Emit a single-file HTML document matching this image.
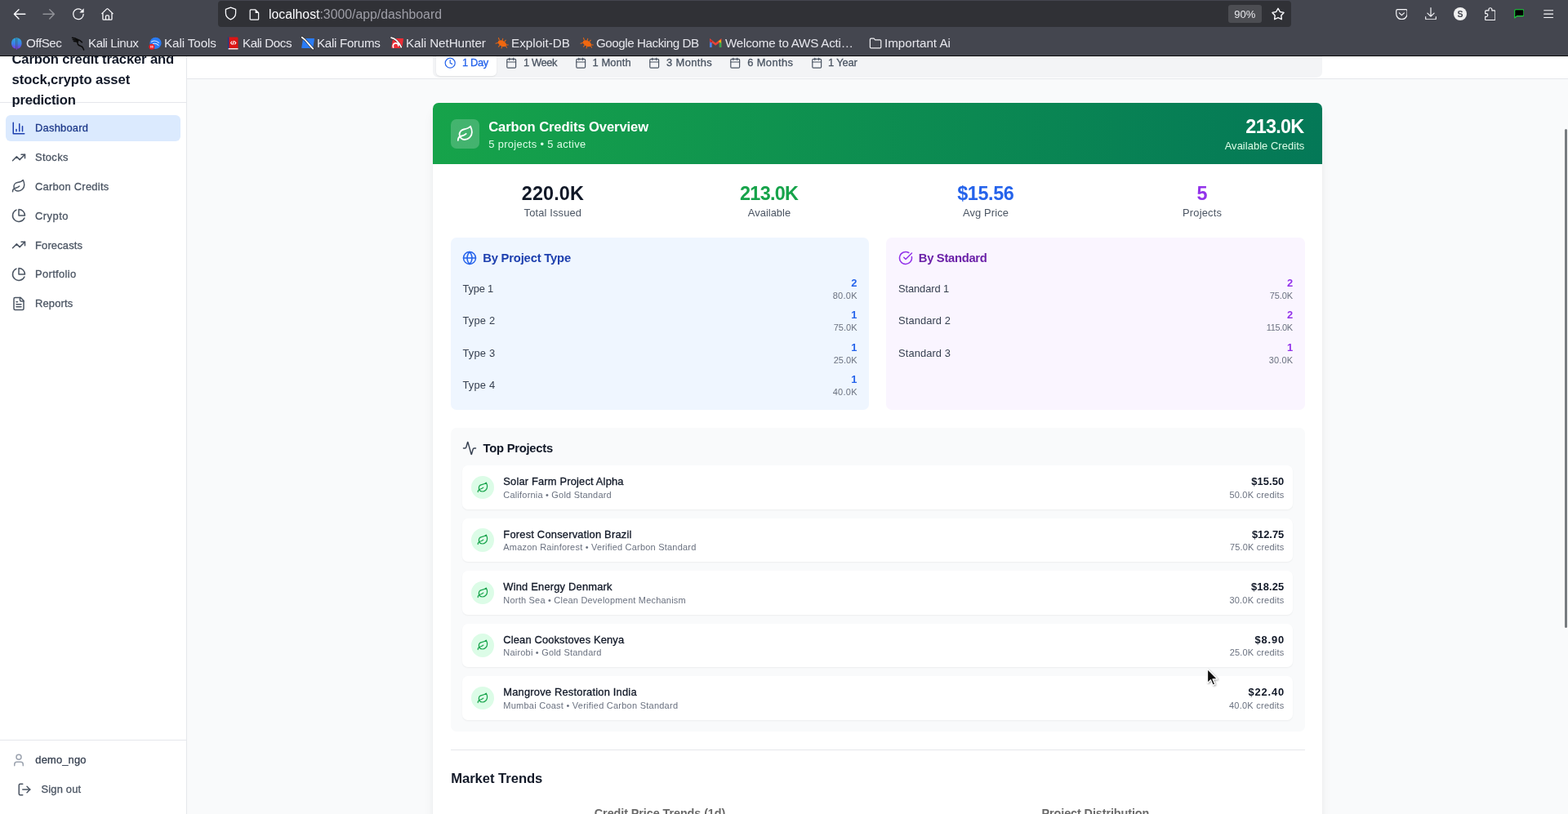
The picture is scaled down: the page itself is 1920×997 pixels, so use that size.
<!DOCTYPE html>
<html lang="en">
<head>
<meta charset="utf-8">
<title>Dashboard - Carbon credit tracker</title>
<style>
*{box-sizing:border-box;margin:0;padding:0}
html,body{width:1920px;height:997px;overflow:hidden;background:#f9fafb}
body{font-family:"Liberation Sans",sans-serif;position:relative;color:#111827}
#page{position:absolute;left:0;top:0;width:1920px;height:997px;overflow:hidden;will-change:transform}
.abs{position:absolute}
svg{display:block}
.ic{fill:none;stroke:currentColor;stroke-width:2;stroke-linecap:round;stroke-linejoin:round}
.t{position:absolute;white-space:nowrap}
#chrome{position:absolute;left:0;top:0;width:1920px;height:69px;background:#44464f;z-index:50;border-bottom:1px solid #0c0c0d;color:#fbfbfe}
#urlbar{position:absolute;left:267px;top:1px;width:1314px;height:32px;border-radius:4px;background:#303136}
#zoomb{position:absolute;left:1504px;top:6px;width:41px;height:22px;border-radius:3px;background:#4c4d52}
#side{position:absolute;left:0;top:0;width:229px;height:997px;background:#fff;border-right:1px solid #e5e7eb;z-index:10}
#top{position:absolute;left:229px;top:69px;width:1691px;height:28px;background:#fff;border-bottom:1px solid #e5e7eb}
#tabs{position:absolute;left:530px;top:55px;width:1089px;height:40.400px;background:#f3f4f6;border-radius:7px}
#tab1{position:absolute;left:534px;top:55px;width:74px;height:37.500px;background:#fff;border-radius:5px;box-shadow:0 1px 2px rgba(0,0,0,.08)}
#card{position:absolute;left:530px;top:126px;width:1089px;height:900px;background:#fff;border-radius:7px 7px 0 0;box-shadow:0 9px 14px -3px rgba(0,0,0,.1),0 4px 6px -4px rgba(0,0,0,.1)}
#ghead{position:absolute;left:530px;top:126px;width:1089px;height:75px;border-radius:7px 7px 0 0;background:linear-gradient(90deg,#16a34a,#047857)}
.box{position:absolute;border-radius:7px}
.item{position:absolute;left:566px;width:1017px;background:#fff;border-radius:7px;box-shadow:0 1px 2px rgba(0,0,0,.05)}
.circ{position:absolute;left:577px;width:28px;border-radius:50%;background:#dcfce7}
</style>
</head>
<body>
<div id="page">
<div id="top"></div>
<div id="tabs"></div>
<div id="tab1"></div>
<svg class="abs ic" style="left:544px;top:70px;width:14.4px;height:14.4px;color:#2563eb;stroke-width:2;" viewBox="0 0 24 24"><circle cx="12" cy="12" r="10"/><polyline points="12 6 12 12 16 14"/></svg>
<div class="t" style="left:566.00px;top:69px;font-size:12.90px;line-height:15px;color:#2563eb;-webkit-text-stroke:.3px currentColor;letter-spacing:-0.387px;">1 Day</div>
<svg class="abs ic" style="left:619px;top:70px;width:14.4px;height:14.4px;color:#4b5563;stroke-width:2;" viewBox="0 0 24 24"><rect width="18" height="18" x="3" y="4" rx="2" ry="2"/><line x1="16" x2="16" y1="2" y2="6"/><line x1="8" x2="8" y1="2" y2="6"/><line x1="3" x2="21" y1="10" y2="10"/></svg>
<div class="t" style="left:641.00px;top:69px;font-size:12.90px;line-height:15px;color:#4b5563;-webkit-text-stroke:.3px currentColor;letter-spacing:-0.387px;">1 Week</div>
<svg class="abs ic" style="left:704px;top:70px;width:14.4px;height:14.4px;color:#4b5563;stroke-width:2;" viewBox="0 0 24 24"><rect width="18" height="18" x="3" y="4" rx="2" ry="2"/><line x1="16" x2="16" y1="2" y2="6"/><line x1="8" x2="8" y1="2" y2="6"/><line x1="3" x2="21" y1="10" y2="10"/></svg>
<div class="t" style="left:725.60px;top:69px;font-size:12.90px;line-height:15px;color:#4b5563;-webkit-text-stroke:.3px currentColor;letter-spacing:0.065px;">1 Month</div>
<svg class="abs ic" style="left:794px;top:70px;width:14.4px;height:14.4px;color:#4b5563;stroke-width:2;" viewBox="0 0 24 24"><rect width="18" height="18" x="3" y="4" rx="2" ry="2"/><line x1="16" x2="16" y1="2" y2="6"/><line x1="8" x2="8" y1="2" y2="6"/><line x1="3" x2="21" y1="10" y2="10"/></svg>
<div class="t" style="left:816.00px;top:69px;font-size:12.90px;line-height:15px;color:#4b5563;-webkit-text-stroke:.3px currentColor;letter-spacing:0.391px;">3 Months</div>
<svg class="abs ic" style="left:893px;top:70px;width:14.4px;height:14.4px;color:#4b5563;stroke-width:2;" viewBox="0 0 24 24"><rect width="18" height="18" x="3" y="4" rx="2" ry="2"/><line x1="16" x2="16" y1="2" y2="6"/><line x1="8" x2="8" y1="2" y2="6"/><line x1="3" x2="21" y1="10" y2="10"/></svg>
<div class="t" style="left:915.20px;top:69px;font-size:12.90px;line-height:15px;color:#4b5563;-webkit-text-stroke:.3px currentColor;letter-spacing:0.391px;">6 Months</div>
<svg class="abs ic" style="left:993px;top:70px;width:14.4px;height:14.4px;color:#4b5563;stroke-width:2;" viewBox="0 0 24 24"><rect width="18" height="18" x="3" y="4" rx="2" ry="2"/><line x1="16" x2="16" y1="2" y2="6"/><line x1="8" x2="8" y1="2" y2="6"/><line x1="3" x2="21" y1="10" y2="10"/></svg>
<div class="t" style="left:1014.00px;top:69px;font-size:12.90px;line-height:15px;color:#4b5563;-webkit-text-stroke:.3px currentColor;letter-spacing:-0.178px;">1 Year</div>
<div id="card"></div>
<div id="ghead"></div>
<div class="abs" style="left:552px;top:146px;width:35px;height:36px;border-radius:7px;background:rgba(255,255,255,.2)"></div>
<svg class="abs ic" style="left:559px;top:153px;width:21.6px;height:21.6px;color:#fff;stroke-width:2;" viewBox="0 0 24 24"><path d="M11 20A7 7 0 0 1 9.8 6.1C15.5 5 17 4.48 19 2c1 2 2 4.18 2 8 0 5.5-4.78 10-10 10Z"/><path d="M2 21c0-3 1.85-5.36 5.08-6C9.5 14.52 12 13 13 12"/></svg>
<div class="t" style="left:598.20px;top:146px;font-size:16.60px;line-height:19px;color:#fff;font-weight:700;letter-spacing:-0.106px;">Carbon Credits Overview</div>
<div class="t" style="left:598.20px;top:169px;font-size:12.90px;line-height:15px;color:#dcfce7;letter-spacing:0.347px;">5 projects • 5 active</div>
<div class="t" style="left:1525.35px;top:142px;font-size:23.40px;line-height:26px;color:#fff;font-weight:700;letter-spacing:-0.702px;">213.0K</div>
<div class="t" style="left:1499.70px;top:171px;font-size:12.90px;line-height:15px;color:#dcfce7;letter-spacing:0.065px;">Available Credits</div>
<div class="t" style="left:638.75px;top:224px;font-size:23.40px;line-height:26px;color:#111827;font-weight:700;letter-spacing:0.129px;">220.0K</div>
<div class="t" style="left:641.55px;top:253px;font-size:12.90px;line-height:15px;color:#4b5563;letter-spacing:0.151px;">Total Issued</div>
<div class="t" style="left:906.03px;top:224px;font-size:23.40px;line-height:26px;color:#16a34a;font-weight:700;letter-spacing:-0.702px;">213.0K</div>
<div class="t" style="left:915.85px;top:253px;font-size:12.90px;line-height:15px;color:#4b5563;letter-spacing:0.023px;">Available</div>
<div class="t" style="left:1172.15px;top:224px;font-size:23.40px;line-height:26px;color:#2563eb;font-weight:700;letter-spacing:-0.374px;">$15.56</div>
<div class="t" style="left:1179.00px;top:253px;font-size:12.90px;line-height:15px;color:#4b5563;letter-spacing:0.129px;">Avg Price</div>
<div class="t" style="left:1465.49px;top:224px;font-size:23.40px;line-height:26px;color:#9333ea;font-weight:700;">5</div>
<div class="t" style="left:1448.10px;top:253px;font-size:12.90px;line-height:15px;color:#4b5563;letter-spacing:0.172px;">Projects</div>
<div class="box" style="left:552px;top:291px;width:511.500px;height:210.500px;background:#eff6ff"></div>
<div class="box" style="left:1085px;top:291px;width:513px;height:210.500px;background:#faf5ff"></div>
<svg class="abs ic" style="left:566px;top:306.85px;width:18px;height:18px;color:#2563eb;stroke-width:2;" viewBox="0 0 24 24"><circle cx="12" cy="12" r="10"/><path d="M12 2a14.5 14.5 0 0 0 0 20 14.5 14.5 0 0 0 0-20"/><path d="M2 12h20"/></svg>
<div class="t" style="left:591.20px;top:308px;font-size:14.80px;line-height:16px;color:#1e40af;font-weight:700;letter-spacing:-0.197px;">By Project Type</div>
<svg class="abs ic" style="left:1100px;top:306.7px;width:18px;height:18px;color:#9333ea;stroke-width:2;" viewBox="0 0 24 24"><path d="M21.801 10A10 10 0 1 1 17 3.335"/><path d="m9 11 3 3L22 4"/></svg>
<div class="t" style="left:1124.80px;top:308px;font-size:14.80px;line-height:16px;color:#6b21a8;font-weight:700;letter-spacing:-0.317px;">By Standard</div>
<div class="t" style="left:566.40px;top:346px;font-size:12.90px;line-height:15px;color:#374151;letter-spacing:-0.165px;">Type 1</div>
<div class="t" style="left:1042.33px;top:339px;font-size:12.90px;line-height:15px;color:#2563eb;font-weight:700;">2</div>
<div class="t" style="left:1019.70px;top:356px;font-size:11.00px;line-height:12px;color:#6b7280;letter-spacing:0.263px;">80.0K</div>
<div class="t" style="left:566.40px;top:385px;font-size:12.90px;line-height:15px;color:#374151;letter-spacing:0.235px;">Type 2</div>
<div class="t" style="left:1042.33px;top:378px;font-size:12.90px;line-height:15px;color:#2563eb;font-weight:700;">1</div>
<div class="t" style="left:1020.70px;top:395px;font-size:11.00px;line-height:12px;color:#6b7280;letter-spacing:0.013px;">75.0K</div>
<div class="t" style="left:566.40px;top:425px;font-size:12.90px;line-height:15px;color:#374151;letter-spacing:0.235px;">Type 3</div>
<div class="t" style="left:1042.33px;top:418px;font-size:12.90px;line-height:15px;color:#2563eb;font-weight:700;">1</div>
<div class="t" style="left:1020.70px;top:435px;font-size:11.00px;line-height:12px;color:#6b7280;letter-spacing:0.013px;">25.0K</div>
<div class="t" style="left:566.40px;top:464px;font-size:12.90px;line-height:15px;color:#374151;letter-spacing:0.235px;">Type 4</div>
<div class="t" style="left:1042.33px;top:457px;font-size:12.90px;line-height:15px;color:#2563eb;font-weight:700;">1</div>
<div class="t" style="left:1019.70px;top:474px;font-size:11.00px;line-height:12px;color:#6b7280;letter-spacing:0.263px;">40.0K</div>
<div class="t" style="left:1100.00px;top:346px;font-size:12.90px;line-height:15px;color:#374151;letter-spacing:-0.102px;">Standard 1</div>
<div class="t" style="left:1576.03px;top:339px;font-size:12.90px;line-height:15px;color:#9333ea;font-weight:700;">2</div>
<div class="t" style="left:1554.80px;top:356px;font-size:11.00px;line-height:12px;color:#6b7280;letter-spacing:-0.087px;">75.0K</div>
<div class="t" style="left:1100.00px;top:385px;font-size:12.90px;line-height:15px;color:#374151;letter-spacing:0.098px;">Standard 2</div>
<div class="t" style="left:1576.03px;top:378px;font-size:12.90px;line-height:15px;color:#9333ea;font-weight:700;">2</div>
<div class="t" style="left:1550.80px;top:395px;font-size:11.00px;line-height:12px;color:#6b7280;letter-spacing:-0.330px;">115.0K</div>
<div class="t" style="left:1100.00px;top:425px;font-size:12.90px;line-height:15px;color:#374151;letter-spacing:0.098px;">Standard 3</div>
<div class="t" style="left:1576.03px;top:418px;font-size:12.90px;line-height:15px;color:#9333ea;font-weight:700;">1</div>
<div class="t" style="left:1553.80px;top:435px;font-size:11.00px;line-height:12px;color:#6b7280;letter-spacing:0.163px;">30.0K</div>
<div class="box" style="left:552px;top:524px;width:1046px;height:371.500px;background:#f9fafb"></div>
<svg class="abs ic" style="left:566px;top:540.3px;width:18px;height:18px;color:#374151;stroke-width:2;" viewBox="0 0 24 24"><path d="M22 12h-2.480a2 2 0 0 0-1.930 1.460l-2.350 8.360a.250.250 0 0 1-.480 0L9.240 2.180a.250.250 0 0 0-.480 0l-2.350 8.360A2 2 0 0 1 4.490 12H2"/></svg>
<div class="t" style="left:591.60px;top:541px;font-size:14.80px;line-height:16px;color:#111827;font-weight:700;letter-spacing:-0.267px;">Top Projects</div>
<div class="item" style="top:570.3px;height:53.4px"></div>
<div class="circ" style="top:583px;height:28px"></div>
<svg class="abs ic" style="left:584.1px;top:589.9px;width:14.4px;height:14.4px;color:#16a34a;stroke-width:2;" viewBox="0 0 24 24"><path d="M11 20A7 7 0 0 1 9.8 6.1C15.5 5 17 4.48 19 2c1 2 2 4.18 2 8 0 5.5-4.78 10-10 10Z"/><path d="M2 21c0-3 1.85-5.36 5.08-6C9.5 14.52 12 13 13 12"/></svg>
<div class="t" style="left:616.30px;top:582px;font-size:12.90px;line-height:15px;color:#111827;-webkit-text-stroke:.3px currentColor;letter-spacing:0.170px;">Solar Farm Project Alpha</div>
<div class="t" style="left:616.30px;top:600px;font-size:11.00px;line-height:12px;color:#6b7280;letter-spacing:0.201px;">California • Gold Standard</div>
<div class="t" style="left:1532.30px;top:582px;font-size:12.90px;line-height:15px;color:#111827;font-weight:700;letter-spacing:0.089px;">$15.50</div>
<div class="t" style="left:1505.40px;top:600px;font-size:11.00px;line-height:12px;color:#6b7280;letter-spacing:0.217px;">50.0K credits</div>
<div class="item" style="top:635.3px;height:52.5px"></div>
<div class="circ" style="top:647px;height:29px"></div>
<svg class="abs ic" style="left:584.1px;top:654.2px;width:14.4px;height:14.4px;color:#16a34a;stroke-width:2;" viewBox="0 0 24 24"><path d="M11 20A7 7 0 0 1 9.8 6.1C15.5 5 17 4.48 19 2c1 2 2 4.18 2 8 0 5.5-4.78 10-10 10Z"/><path d="M2 21c0-3 1.85-5.36 5.08-6C9.5 14.52 12 13 13 12"/></svg>
<div class="t" style="left:616.30px;top:647px;font-size:12.90px;line-height:15px;color:#111827;-webkit-text-stroke:.3px currentColor;letter-spacing:0.208px;">Forest Conservation Brazil</div>
<div class="t" style="left:616.30px;top:664px;font-size:11.00px;line-height:12px;color:#6b7280;letter-spacing:0.209px;">Amazon Rainforest • Verified Carbon Standard</div>
<div class="t" style="left:1533.00px;top:647px;font-size:12.90px;line-height:15px;color:#111827;font-weight:700;letter-spacing:-0.051px;">$12.75</div>
<div class="t" style="left:1506.00px;top:664px;font-size:11.00px;line-height:12px;color:#6b7280;letter-spacing:0.167px;">75.0K credits</div>
<div class="item" style="top:699px;height:54.3px"></div>
<div class="circ" style="top:712px;height:28px"></div>
<svg class="abs ic" style="left:584.1px;top:719.1px;width:14.4px;height:14.4px;color:#16a34a;stroke-width:2;" viewBox="0 0 24 24"><path d="M11 20A7 7 0 0 1 9.8 6.1C15.5 5 17 4.48 19 2c1 2 2 4.18 2 8 0 5.5-4.78 10-10 10Z"/><path d="M2 21c0-3 1.85-5.36 5.08-6C9.5 14.52 12 13 13 12"/></svg>
<div class="t" style="left:616.30px;top:711px;font-size:12.90px;line-height:15px;color:#111827;-webkit-text-stroke:.3px currentColor;letter-spacing:0.197px;">Wind Energy Denmark</div>
<div class="t" style="left:616.30px;top:729px;font-size:11.00px;line-height:12px;color:#6b7280;letter-spacing:0.211px;">North Sea • Clean Development Mechanism</div>
<div class="t" style="left:1532.00px;top:711px;font-size:12.90px;line-height:15px;color:#111827;font-weight:700;letter-spacing:0.149px;">$18.25</div>
<div class="t" style="left:1505.40px;top:729px;font-size:11.00px;line-height:12px;color:#6b7280;letter-spacing:0.217px;">30.0K credits</div>
<div class="item" style="top:764px;height:53px"></div>
<div class="circ" style="top:776px;height:29px"></div>
<svg class="abs ic" style="left:584.1px;top:783px;width:14.4px;height:14.4px;color:#16a34a;stroke-width:2;" viewBox="0 0 24 24"><path d="M11 20A7 7 0 0 1 9.8 6.1C15.5 5 17 4.48 19 2c1 2 2 4.18 2 8 0 5.5-4.78 10-10 10Z"/><path d="M2 21c0-3 1.85-5.36 5.08-6C9.5 14.52 12 13 13 12"/></svg>
<div class="t" style="left:616.30px;top:776px;font-size:12.90px;line-height:15px;color:#111827;-webkit-text-stroke:.3px currentColor;letter-spacing:0.145px;">Clean Cookstoves Kenya</div>
<div class="t" style="left:616.30px;top:793px;font-size:11.00px;line-height:12px;color:#6b7280;letter-spacing:0.202px;">Nairobi • Gold Standard</div>
<div class="t" style="left:1536.60px;top:776px;font-size:12.90px;line-height:15px;color:#111827;font-weight:700;letter-spacing:0.830px;">$8.90</div>
<div class="t" style="left:1505.70px;top:793px;font-size:11.00px;line-height:12px;color:#6b7280;letter-spacing:0.192px;">25.0K credits</div>
<div class="item" style="top:828.2px;height:53.6px"></div>
<div class="circ" style="top:841px;height:28px"></div>
<svg class="abs ic" style="left:584.1px;top:848.2px;width:14.4px;height:14.4px;color:#16a34a;stroke-width:2;" viewBox="0 0 24 24"><path d="M11 20A7 7 0 0 1 9.8 6.1C15.5 5 17 4.48 19 2c1 2 2 4.18 2 8 0 5.5-4.78 10-10 10Z"/><path d="M2 21c0-3 1.85-5.36 5.08-6C9.5 14.52 12 13 13 12"/></svg>
<div class="t" style="left:616.30px;top:840px;font-size:12.90px;line-height:15px;color:#111827;-webkit-text-stroke:.3px currentColor;letter-spacing:0.197px;">Mangrove Restoration India</div>
<div class="t" style="left:616.30px;top:858px;font-size:11.00px;line-height:12px;color:#6b7280;letter-spacing:0.245px;">Mumbai Coast • Verified Carbon Standard</div>
<div class="t" style="left:1528.50px;top:840px;font-size:12.90px;line-height:15px;color:#111827;font-weight:700;letter-spacing:0.849px;">$22.40</div>
<div class="t" style="left:1504.90px;top:858px;font-size:11.00px;line-height:12px;color:#6b7280;letter-spacing:0.258px;">40.0K credits</div>
<div class="abs" style="left:552px;top:918px;width:1046px;height:1px;background:#e5e7eb"></div>
<div class="t" style="left:552.20px;top:944px;font-size:16.60px;line-height:19px;color:#111827;font-weight:700;letter-spacing:-0.029px;">Market Trends</div>
<div class="t" style="left:727.80px;top:988px;font-size:14.40px;line-height:16px;color:#6a6a6a;font-weight:700;letter-spacing:-0.080px;">Credit Price Trends (1d)</div>
<div class="t" style="left:1275.60px;top:988px;font-size:14.40px;line-height:16px;color:#6a6a6a;font-weight:700;letter-spacing:-0.095px;">Project Distribution</div>
<div id="side">
<div class="abs" style="left:0;top:125px;width:228px;height:1px;background:#e5e7eb"></div>
<div class="t" style="left:14.50px;top:63px;font-size:16.60px;line-height:19px;color:#111827;font-weight:700;letter-spacing:-0.139px;">Carbon credit tracker and</div>
<div class="t" style="left:14.50px;top:88px;font-size:16.60px;line-height:19px;color:#111827;font-weight:700;letter-spacing:-0.058px;">stock,crypto asset</div>
<div class="t" style="left:14.50px;top:113px;font-size:16.60px;line-height:19px;color:#111827;font-weight:700;letter-spacing:-0.215px;">prediction</div>
<div class="abs" style="left:7px;top:141px;width:214px;height:32px;border-radius:6px;background:#dbeafe"></div>
<svg class="abs ic" style="left:14px;top:148px;width:18px;height:18px;color:#1e40af;stroke-width:2;" viewBox="0 0 24 24"><path d="M3 3v18h18"/><path d="M18 17V9"/><path d="M13 17V5"/><path d="M8 17v-3"/></svg>
<div class="t" style="left:43.00px;top:149px;font-size:12.90px;line-height:15px;color:#1e3a8a;-webkit-text-stroke:.3px currentColor;letter-spacing:0.236px;">Dashboard</div>
<svg class="abs ic" style="left:14px;top:184px;width:18px;height:18px;color:#4b5563;stroke-width:2;" viewBox="0 0 24 24"><polyline points="22 7 13.5 15.5 8.5 10.5 2 17"/><polyline points="16 7 22 7 22 13"/></svg>
<div class="t" style="left:43.00px;top:185px;font-size:12.90px;line-height:15px;color:#4b5563;-webkit-text-stroke:.3px currentColor;letter-spacing:0.337px;">Stocks</div>
<svg class="abs ic" style="left:14px;top:219px;width:18px;height:18px;color:#4b5563;stroke-width:2;" viewBox="0 0 24 24"><path d="M11 20A7 7 0 0 1 9.8 6.1C15.5 5 17 4.48 19 2c1 2 2 4.18 2 8 0 5.5-4.78 10-10 10Z"/><path d="M2 21c0-3 1.85-5.36 5.08-6C9.5 14.52 12 13 13 12"/></svg>
<div class="t" style="left:43.00px;top:221px;font-size:12.90px;line-height:15px;color:#4b5563;-webkit-text-stroke:.3px currentColor;letter-spacing:0.273px;">Carbon Credits</div>
<svg class="abs ic" style="left:14px;top:255px;width:18px;height:18px;color:#4b5563;stroke-width:2;" viewBox="0 0 24 24"><path d="M21.21 15.89A10 10 0 1 1 8 2.83"/><path d="M22 12A10 10 0 0 0 12 2v10z"/></svg>
<div class="t" style="left:43.00px;top:257px;font-size:12.90px;line-height:15px;color:#4b5563;-webkit-text-stroke:.3px currentColor;letter-spacing:0.481px;">Crypto</div>
<svg class="abs ic" style="left:14px;top:291px;width:18px;height:18px;color:#4b5563;stroke-width:2;" viewBox="0 0 24 24"><polyline points="22 7 13.5 15.5 8.5 10.5 2 17"/><polyline points="16 7 22 7 22 13"/></svg>
<div class="t" style="left:43.00px;top:293px;font-size:12.90px;line-height:15px;color:#4b5563;-webkit-text-stroke:.3px currentColor;letter-spacing:0.171px;">Forecasts</div>
<svg class="abs ic" style="left:14px;top:327px;width:18px;height:18px;color:#4b5563;stroke-width:2;" viewBox="0 0 24 24"><path d="M21.21 15.89A10 10 0 1 1 8 2.83"/><path d="M22 12A10 10 0 0 0 12 2v10z"/></svg>
<div class="t" style="left:43.00px;top:328px;font-size:12.90px;line-height:15px;color:#4b5563;-webkit-text-stroke:.3px currentColor;letter-spacing:0.360px;">Portfolio</div>
<svg class="abs ic" style="left:14px;top:363px;width:18px;height:18px;color:#4b5563;stroke-width:2;" viewBox="0 0 24 24"><path d="M15 2H6a2 2 0 0 0-2 2v16a2 2 0 0 0 2 2h12a2 2 0 0 0 2-2V7Z"/><path d="M14 2v4a2 2 0 0 0 2 2h4"/><path d="M10 9H8"/><path d="M16 13H8"/><path d="M16 17H8"/></svg>
<div class="t" style="left:43.00px;top:364px;font-size:12.90px;line-height:15px;color:#4b5563;-webkit-text-stroke:.3px currentColor;letter-spacing:0.172px;">Reports</div>
<div class="abs" style="left:0;top:906px;width:228px;height:1px;background:#e5e7eb"></div>
<svg class="abs ic" style="left:14px;top:922.3px;width:18px;height:18px;color:#9ca3af;stroke-width:2;" viewBox="0 0 24 24"><path d="M19 21v-2a4 4 0 0 0-4-4H9a4 4 0 0 0-4 4v2"/><circle cx="12" cy="7" r="4"/></svg>
<div class="t" style="left:43.30px;top:923px;font-size:12.90px;line-height:15px;color:#374151;-webkit-text-stroke:.3px currentColor;letter-spacing:0.176px;">demo_ngo</div>
<svg class="abs ic" style="left:21px;top:958px;width:18px;height:18px;color:#4b5563;stroke-width:2;" viewBox="0 0 24 24"><path d="M9 21H5a2 2 0 0 1-2-2V5a2 2 0 0 1 2-2h4"/><polyline points="16 17 21 12 16 7"/><line x1="21" x2="9" y1="12" y2="12"/></svg>
<div class="t" style="left:50.50px;top:959px;font-size:12.90px;line-height:15px;color:#4b5563;-webkit-text-stroke:.3px currentColor;letter-spacing:0.195px;">Sign out</div>
</div>
<div class="abs" style="left:1916px;top:158px;width:2.500px;height:611px;border-radius:2px;background:#777b7f;z-index:20"></div>
<svg class="abs" style="left:1475px;top:816px;width:20px;height:28px;z-index:60;overflow:visible" viewBox="0 0 20 28"><defs><filter id="cs" x="-30%" y="-30%" width="180%" height="180%"><feGaussianBlur in="SourceAlpha" stdDeviation=".8"/><feOffset dx=".6" dy=".8"/><feComponentTransfer><feFuncA type="linear" slope=".45"/></feComponentTransfer><feMerge><feMergeNode/><feMergeNode in="SourceGraphic"/></feMerge></filter></defs><path d="M3.600 3.700v16.600l3.900-3.700 2.800 6.500 2.400-1-2.800-6.400h5.500z" fill="#0b0b0b" stroke="#fff" stroke-width="1.1" stroke-linejoin="round" filter="url(#cs)"/></svg>
<div id="chrome">
<div id="urlbar"></div>
<svg class="abs ic" style="left:15.700px;top:9.900px;width:16px;height:15px;stroke-width:1.4" viewBox="0 0 16 15"><path d="M14.800 7.300H1.400M7 1.700 1.400 7.300 7 12.900"/></svg>
<svg class="abs ic" style="left:52.200px;top:9.900px;width:16px;height:15px;stroke-width:1.4;opacity:.42" viewBox="0 0 16 15"><path d="M1 7.300h13.400M8.800 1.700l5.600 5.600-5.600 5.600"/></svg>
<svg class="abs ic" style="left:88px;top:9px;width:16px;height:16px;stroke-width:1.25" viewBox="0 0 16 16"><path d="M14.200 8.300A6.300 6.300 0 1 1 11.400 3"/><path d="M14.600 1.200v5.200H9.400z" fill="currentColor" stroke="none"/></svg>
<svg class="abs ic" style="left:123px;top:9px;width:17px;height:17px;stroke-width:1.3" viewBox="0 0 17 17"><path d="M1.800 7.600 7.800 1.900c.400-.400.900-.400 1.300 0l6 5.700M2.900 6.800v7.400c0 .600.400 1 1 1h9.100c.600 0 1-.400 1-1V6.800M6.500 15.200v-4.100c0-.700.500-1.200 1.200-1.200h1.500c.700 0 1.200.500 1.200 1.200v4.100"/></svg>
<svg class="abs ic" style="left:275.200px;top:8px;width:15px;height:17px;stroke-width:1.25" viewBox="0 0 15 17"><path d="M7.500 1.100 1.400 3.400v4.500c0 3.700 2.400 6.500 6.100 8 3.700-1.500 6.100-4.300 6.100-8V3.400z"/></svg>
<svg class="abs ic" style="left:304.500px;top:10.500px;width:13px;height:14px;stroke-width:1.25" viewBox="0 0 13 14"><path d="M1.200 1.900c0-.600.400-1 1-1h5.600l3.800 3.800v7.500c0 .600-.400 1-1 1H2.200c-.600 0-1-.400-1-1z"/><path d="M7.600 1v3.900h3.900z" fill="currentColor" stroke="none"/></svg>
<div class="t" style="left:329.00px;top:9px;font-size:15.80px;line-height:17px;color:#fbfbfe;letter-spacing:0.011px;">localhost<span style="color:#9e9ea7">:3000/app/dashboard</span></div>
<div id="zoomb"></div>
<div class="t" style="left:1511.20px;top:10px;font-size:13.00px;line-height:15px;color:#e8e8ec;letter-spacing:0.090px;">90%</div>
<svg class="abs ic" style="left:1556.400px;top:8px;width:18px;height:18px;stroke-width:1.4" viewBox="0 0 18 18"><path d="M9.00 2.30 L11.35 6.46 L16.04 7.41 L12.80 10.94 L13.35 15.69 L9.00 13.70 L4.65 15.69 L5.20 10.94 L1.96 7.41 L6.65 6.46Z"/></svg>
<svg class="abs ic" style="left:1708.600px;top:10.600px;width:14.800px;height:13.400px;stroke-width:1.15" viewBox="0 0 14.800 13.400"><path d="M2.400.700h10c.900 0 1.700.700 1.700 1.700v3.600a6.700 6.700 0 0 1-13.400 0V2.400C.700 1.400 1.500.700 2.400.700z"/><path d="M4.400 4.800 7.400 7.700l3-2.900"/></svg>
<svg class="abs ic" style="left:1744.500px;top:8.800px;width:14px;height:15.600px;stroke-width:1.15" viewBox="0 0 14 15.600"><path d="M7 .700v10.300M2.900 7.100 7 11.100l4.100-4M.700 11.700v2c0 .700.500 1.200 1.200 1.200h10.200c.700 0 1.200-.500 1.200-1.200v-2"/></svg>
<div class="abs" style="left:1780px;top:9px;width:16px;height:16px;border-radius:50%;background:#f0f0f0;color:#44464f;font-size:10.5px;font-weight:bold;line-height:16.500px;text-align:center">S</div>
<svg class="abs ic" style="left:1817.600px;top:8.800px;width:13.600px;height:16.400px;stroke-width:1.15" viewBox="0 0 13.600 16.400"><path d="M4.900 3.900V2.700a2 2 0 0 1 4 0v1.200h3c.600 0 1 .400 1 1v9.800c0 .600-.400 1-1 1H1.700c-.600 0-1-.400-1-1v-3.300h1.200a1.900 1.900 0 0 0 0-3.800H.700V4.900c0-.600.400-1 1-1z"/></svg>
<svg class="abs" style="left:1853.700px;top:10.800px;width:12.600px;height:11.800px" viewBox="0 0 12.600 11.800"><path d="M2.100.700h8.400c.800 0 1.400.600 1.400 1.400v5.100c0 .800-.600 1.400-1.400 1.400H3.400L.700 11V2.100C.700 1.300 1.300.700 2.100.700z" fill="#000" stroke="#1bd43c" stroke-width="1.1" stroke-linejoin="round"/></svg>
<svg class="abs ic" style="left:1889.600px;top:11.600px;width:12.600px;height:10.400px;stroke-width:1.15" viewBox="0 0 12.600 10.400"><path d="M.700.800h11.200M.700 5.200h11.200M.700 9.600h11.200"/></svg>
<svg width="0" height="0" style="position:absolute"><defs><linearGradient id="g1" x1="0" y1="0" x2="0" y2="1"><stop offset="0" stop-color="#29a9d8"/><stop offset=".55" stop-color="#3b7fe8"/><stop offset="1" stop-color="#7a35e0"/></linearGradient></defs></svg>
<svg class="abs" style="left:12px;top:45px;width:16px;height:16px;overflow:visible" viewBox="0 0 16 16"><path d="M7.300 1.200A7 7 0 0 0 7.300 14.800z" fill="url(#g1)"/><path d="M9.300 1.200A7 7 0 0 1 9.300 14.800z" fill="url(#g1)"/><rect x="7.800" y="1" width="1" height="14.800" fill="url(#g1)"/></svg>
<div class="t" style="left:32.00px;top:44px;font-size:15.20px;line-height:17px;color:#e6e6ec;letter-spacing:-0.437px;">OffSec</div>
<svg class="abs" style="left:88px;top:45px;width:16px;height:16px;overflow:visible" viewBox="0 0 16 16"><path d="M.500 1.200c2.600.200 4.800.900 6.600 2.300M1.200 3.400c2.400-.100 4.600.500 6.400 1.800M2.400 5.600c1.800 0 3.400.400 4.800 1.200M6.800 3.200c2.200.600 4.200 1.800 5.600 3.600M7.200 6.400c-.800 2.600.600 4.200 3.200 4.800 1.800.400 3 1.400 3.600 3.200l.600 1.600" fill="none" stroke="#0b0b0b" stroke-width="1.500" stroke-linecap="round" stroke-linejoin="round"/></svg>
<div class="t" style="left:108.00px;top:44px;font-size:15.20px;line-height:17px;color:#e6e6ec;letter-spacing:-0.456px;">Kali Linux</div>
<svg class="abs" style="left:182px;top:45px;width:16px;height:16px;overflow:visible" viewBox="0 0 16 16"><circle cx="8.500" cy="7.800" r="7.100" fill="#2a7cf6"/><path d="M3.400 6.200c3.200-1.800 6.600-1.200 9 1.200M5.400 8.600c2.400-.800 4.600-.200 6.600 1.800" fill="none" stroke="#d6e6ff" stroke-width="1.100" stroke-linecap="round"/><circle cx="3.900" cy="12.200" r="3.500" fill="#ec1c24"/><path d="M2.900 10.800v2.800M4.900 10.800v2.800" stroke="#fff" stroke-width="1"/></svg>
<div class="t" style="left:201.00px;top:44px;font-size:15.20px;line-height:17px;color:#e6e6ec;letter-spacing:-0.087px;">Kali Tools</div>
<svg class="abs" style="left:278px;top:45px;width:16px;height:16px;overflow:visible" viewBox="0 0 16 16"><rect x="1" y="0.500" width="12.500" height="15" rx="1.200" fill="#dc1515"/><rect x="1" y="0.500" width="1.400" height="15" fill="#173a8c"/><rect x="1.600" y="14" width="11.900" height="1.500" fill="#ececec"/><path d="M6.200 5.500 4.600 7.400l1.600 1.900M9.200 5.500l1.600 1.900-1.600 1.900M8.300 4.900 7.100 9.900" stroke="#fff" stroke-width="1.100" fill="none"/></svg>
<div class="t" style="left:297.00px;top:44px;font-size:15.20px;line-height:17px;color:#e6e6ec;letter-spacing:-0.456px;">Kali Docs</div>
<svg class="abs" style="left:369px;top:45px;width:16px;height:16px;overflow:visible" viewBox="0 0 16 16"><path d="M3 2h12.200c.500 0 .900.400.800 1l-1.700 10.200c-.100.500-.500.800-1 .800H1.100c-.500 0-.900-.400-.800-1L2 2.800c.100-.500.500-.800 1-.800z" fill="#2a7cf6"/><path d="M.800.800C3.400 2.600 6 5 8.600 8.400c1.600 2 3.400 4 5.600 6.200" stroke="#1d1d1d" stroke-width="3" fill="none" stroke-linecap="round"/><path d="M.800.800C3.400 2.600 6 5 8.600 8.400c1.600 2 3.400 4 5.600 6.200" stroke="#fff" stroke-width="2" fill="none" stroke-linecap="round"/></svg>
<div class="t" style="left:388.00px;top:44px;font-size:15.20px;line-height:17px;color:#e6e6ec;letter-spacing:-0.308px;">Kali Forums</div>
<svg class="abs" style="left:478px;top:45px;width:16px;height:16px;overflow:visible" viewBox="0 0 16 16"><path d="M4 2h11.200c.500 0 .900.400.800 1l-1.700 10.200c-.100.500-.500.800-1 .800H2.100c-.500 0-.900-.400-.800-1L3 2.800c.100-.500.500-.800 1-.800z" fill="#ef2d36"/><path d="M1 1.200c4.200.800 8.400 3.600 12.400 11.600" stroke="#1d1d1d" stroke-width="2.600" fill="none" stroke-linecap="round"/><path d="M1 1.200c4.200.800 8.400 3.600 12.400 11.600M3.600 13c-1.200-3 .600-5.400 3.400-5.200 2 .200 3 1.600 2.800 3.200" stroke="#fff" stroke-width="1.700" fill="none" stroke-linecap="round"/></svg>
<div class="t" style="left:497.00px;top:44px;font-size:15.20px;line-height:17px;color:#e6e6ec;letter-spacing:-0.065px;">Kali NetHunter</div>
<svg class="abs" style="left:607px;top:45px;width:16px;height:16px;overflow:visible" viewBox="0 0 16 16"><g transform="rotate(28 8 8)"><ellipse cx="8" cy="8.200" rx="5.600" ry="3.400" fill="#f0670f"/><path d="M3 6.200 1 4.400M3 10.200 1 12M6.500 5 6 2.600M9.500 5 10 2.600M6.500 11.400 6 13.800M9.500 11.400 10 13.800M13.400 7.400l2-1M13.400 9l2 1" stroke="#f0670f" stroke-width="1" fill="none" stroke-linecap="round"/></g></svg>
<div class="t" style="left:626.00px;top:44px;font-size:15.20px;line-height:17px;color:#e6e6ec;letter-spacing:0.022px;">Exploit-DB</div>
<svg class="abs" style="left:711px;top:45px;width:16px;height:16px;overflow:visible" viewBox="0 0 16 16"><g transform="rotate(28 8 8)"><ellipse cx="8" cy="8.200" rx="5.600" ry="3.400" fill="#f0670f"/><path d="M3 6.200 1 4.400M3 10.200 1 12M6.500 5 6 2.600M9.500 5 10 2.600M6.500 11.400 6 13.800M9.500 11.400 10 13.800M13.400 7.400l2-1M13.400 9l2 1" stroke="#f0670f" stroke-width="1" fill="none" stroke-linecap="round"/></g></svg>
<div class="t" style="left:730.00px;top:44px;font-size:15.20px;line-height:17px;color:#e6e6ec;letter-spacing:-0.456px;">Google Hacking DB</div>
<svg class="abs" style="left:869px;top:45px;width:16px;height:16px;overflow:visible" viewBox="0 0 16 16"><path d="M1.300 12.800V4.600L7.200 9.200l5.900-4.600v8.200" fill="none" stroke="#ea4335" stroke-width="2.600"/><path d="M1.300 13V5.800" stroke="#4285f4" stroke-width="2.600"/><path d="M13.100 13V5.800" stroke="#34a853" stroke-width="2.600"/><path d="M11.800 5.700l1.300-1v1.900z" fill="#fbbc04" stroke="#fbbc04" stroke-width="1.300"/><path d="M2.600 5.700 1.300 4.700v1.900z" fill="#c5221f" stroke="#c5221f" stroke-width="1.300"/></svg>
<div class="t" style="left:888.00px;top:44px;font-size:15.20px;line-height:17px;color:#e6e6ec;letter-spacing:-0.228px;">Welcome to AWS Acti…</div>
<svg class="abs" style="left:1064px;top:45px;width:16px;height:16px;overflow:visible" viewBox="0 0 16 16"><path d="M1.400 3.400c0-.700.500-1.200 1.200-1.200h3.500l1.500 1.700h6c.700 0 1.200.500 1.200 1.200v7.600c0 .700-.500 1.200-1.200 1.200H2.600c-.700 0-1.200-.500-1.200-1.200z" fill="none" stroke="#f0f0f4" stroke-width="1.200" stroke-linejoin="round"/></svg>
<div class="t" style="left:1083.00px;top:44px;font-size:15.20px;line-height:17px;color:#e6e6ec;letter-spacing:-0.010px;">Important Ai</div>
</div>
</div>
</body>
</html>
